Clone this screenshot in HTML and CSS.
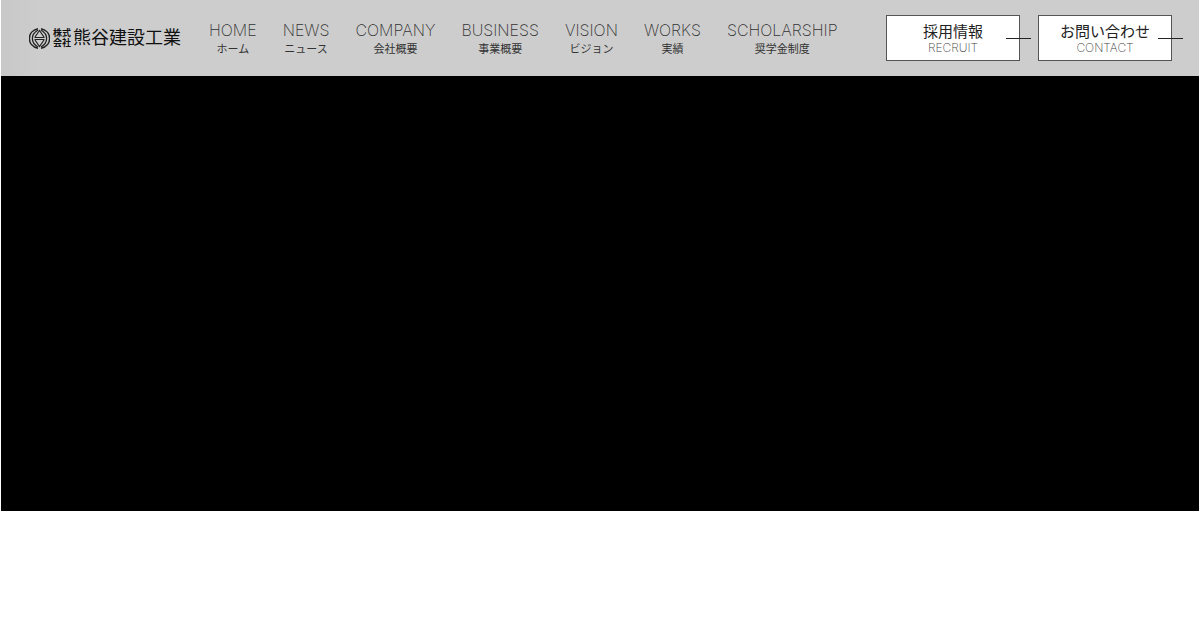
FILE: index.html
```html
<!DOCTYPE html>
<html lang="ja">
<head>
  <meta charset="UTF-8" />
  <meta name="viewport" content="width=device-width, initial-scale=1.0"/>
  <title>株式会社熊谷建設工業</title>
  <link rel="stylesheet" href="styles.css">
</head>
<body>

  <header class="header">
    <a class="logo" href="#">
      <svg class="logo-mark" viewBox="0 0 42 42" aria-hidden="true">
        <path d="M18 1.5 C-5 6 -5 36 18 40.5 M24 1.5 C47 6 47 36 24 40.5" stroke-width="3" />
        <path d="M18 4 C3 13 3 29 18 38 M24 4 C39 13 39 29 24 38" stroke-width="2.6" />
        <path d="M12 18 L21 5 L30 18 M12 24 L21 37 L30 24" stroke-width="2.4" />
        <path d="M11 19 H31 M11 23 H31" stroke-width="2" />
      </svg>
      <span class="logo-type">株式<br>会社</span>
      <span class="logo-name">熊谷建設工業</span>
    </a>

    <nav class="nav">
      <a href="#"><span class="en">HOME</span><span class="ja">ホーム</span></a>
      <a href="#"><span class="en">NEWS</span><span class="ja">ニュース</span></a>
      <a href="#"><span class="en">COMPANY</span><span class="ja">会社概要</span></a>
      <a href="#"><span class="en">BUSINESS</span><span class="ja">事業概要</span></a>
      <a href="#"><span class="en">VISION</span><span class="ja">ビジョン</span></a>
      <a href="#"><span class="en">WORKS</span><span class="ja">実績</span></a>
      <a href="#"><span class="en">SCHOLARSHIP</span><span class="ja">奨学金制度</span></a>
    </nav>

    <div class="actions">
      <a class="btn" href="#"><span class="btn-ja">採用情報</span><span class="btn-en">RECRUIT</span></a>
      <a class="btn" href="#"><span class="btn-ja">お問い合わせ</span><span class="btn-en">CONTACT</span></a>
    </div>
  </header>

  <main class="hero"></main>

</body>
</html>
```
FILE: styles.css
```css
* {
  box-sizing: border-box;
}

body {
  margin: 0 1px;
  background: #fff;
  color: #222;
  font-family: Inter, "Noto Sans CJK JP", sans-serif;
}

a {
  color: inherit;
  text-decoration: none;
}

.header {
  display: flex;
  align-items: center;
  height: 76px;
  padding: 0 27px 0 28px;
  background: linear-gradient(to right, #c8c8c8, #cdcdcd 40px);
}

.logo {
  display: flex;
  align-items: center;
  gap: 2px;
  margin-right: 28px;
  color: #111;
  white-space: nowrap;
}

.logo-mark {
  width: 21px;
  height: 21px;
  margin-right: 1px;
  fill: none;
  stroke: #222;
}

.logo-type {
  font-size: 9px;
  font-weight: 700;
  line-height: 10px;
}

.logo-name {
  font-size: 18px;
  line-height: 24px;
}

.nav {
  display: flex;
  gap: 26px;
  padding-top: 2px;
}

.nav a {
  display: flex;
  flex-direction: column;
  align-items: center;
  white-space: nowrap;
}

.en {
  color: #333;
  font-size: 16px;
  font-weight: 200;
  line-height: 20px;
}

.ja {
  color: #333;
  font-size: 11px;
  line-height: 18px;
}

.actions {
  display: flex;
  gap: 18px;
  margin-left: auto;
}

.btn {
  position: relative;
  display: flex;
  flex-direction: column;
  align-items: center;
  justify-content: center;
  width: 134px;
  height: 46px;
  padding-top: 2px;
  border: 1px solid #555;
  background: #fff;
}

/* line running out over the right edge */
.btn::after {
  content: "";
  position: absolute;
  top: 22px;
  right: -12px;
  width: 25px;
  height: 1px;
  background: #222;
}

.btn-ja {
  font-size: 15px;
  line-height: 18px;
}

.btn-en {
  color: #444;
  font-size: 12px;
  font-weight: 200;
  line-height: 14px;
}

.hero {
  min-height: 435px;
  background: #000;
}
```
